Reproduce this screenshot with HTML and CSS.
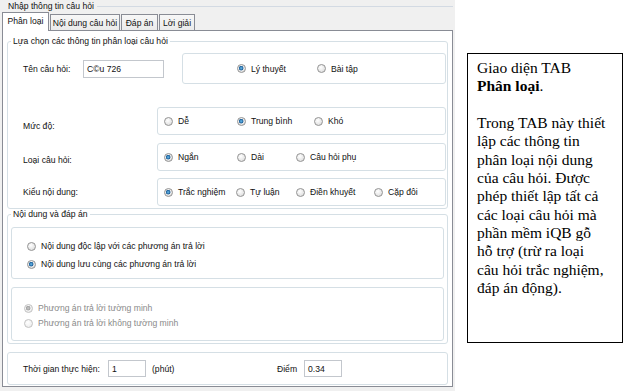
FILE: index.html
```html
<!DOCTYPE html>
<html lang="vi">
<head>
    <meta charset="UTF-8">
    <title>Nhập thông tin câu hỏi</title>
    <link rel="stylesheet" href="styles.css">
</head>
<body>
    <div class="page">
        <div class="dialog">
            <div class="dlg-title"><span>Nhập thông tin câu hỏi</span></div>

            <div class="tabs">
                <div class="tab active">Phân loại</div>
                <div class="tab tab-content">Nội dung câu hỏi</div>
                <div class="tab tab-answer">Đáp án</div>
                <div class="tab tab-solution">Lời giải</div>
            </div>

            <div class="panel">
                <fieldset class="section">
                    <legend>Lựa chọn các thông tin phân loại câu hỏi</legend>
                    <div class="section-body classify">
                        <div class="row row-name">
                            <span class="field-label name-label">Tên câu hỏi:</span>
                            <div class="textbox tb-name">C©u 726</div>
                            <div class="group grp-kind">
                                <span class="opt w80"><i class="radio checked"></i>Lý thuyết</span>
                                <span class="opt"><i class="radio"></i>Bài tập</span>
                            </div>
                        </div>

                        <div class="row row-level">
                            <span class="field-label">Mức độ:</span>
                            <div class="group">
                                <span class="opt w73"><i class="radio"></i>Dễ</span>
                                <span class="opt w77"><i class="radio checked"></i>Trung bình</span>
                                <span class="opt"><i class="radio"></i>Khó</span>
                            </div>
                        </div>

                        <div class="row row-type">
                            <span class="field-label">Loại câu hỏi:</span>
                            <div class="group">
                                <span class="opt w73"><i class="radio checked"></i>Ngắn</span>
                                <span class="opt w59"><i class="radio"></i>Dài</span>
                                <span class="opt"><i class="radio"></i>Câu hỏi phụ</span>
                            </div>
                        </div>

                        <div class="row row-format">
                            <span class="field-label">Kiểu nội dung:</span>
                            <div class="group">
                                <span class="opt w72"><i class="radio checked"></i>Trắc nghiệm</span>
                                <span class="opt w60"><i class="radio"></i>Tự luận</span>
                                <span class="opt w78"><i class="radio"></i>Điền khuyết</span>
                                <span class="opt"><i class="radio"></i>Cặp đôi</span>
                            </div>
                        </div>
                    </div>
                </fieldset>

                <fieldset class="section">
                    <legend>Nội dung và đáp án</legend>
                    <div class="section-body answers">
                        <div class="group stack grp-storage">
                            <span class="opt"><i class="radio"></i>Nội dung độc lập với các phương án trả lời</span>
                            <span class="opt"><i class="radio checked"></i>Nội dung lưu cùng các phương án trả lời</span>
                        </div>
                        <div class="group stack grp-explicit">
                            <span class="opt disabled"><i class="radio checked"></i>Phương án trả lời tường minh</span>
                            <span class="opt disabled"><i class="radio"></i>Phương án trả lời không tường minh</span>
                        </div>
                    </div>
                </fieldset>

                <div class="group footer">
                    <span class="time-label">Thời gian thực hiện:</span>
                    <div class="textbox tb-small">1</div>
                    <span class="unit">(phút)</span>
                    <span class="score-label">Điểm</span>
                    <div class="textbox tb-small">0.34</div>
                </div>
            </div>
        </div>

        <div class="note">
            Giao diện TAB<br>
            <b>Phân loại</b>.<br>
            <br>
            Trong TAB này thiết<br>
            lập các thông tin<br>
            phân loại nội dung<br>
            của câu hỏi. Được<br>
            phép thiết lập tất cả<br>
            các loại câu hỏi mà<br>
            phần mềm iQB gỗ<br>
            hỗ trợ (trừ ra loại<br>
            câu hỏi trắc nghiệm,<br>
            đáp án động).
        </div>
    </div>
</body>
</html>
```

FILE: styles.css
```css
:root {
    --ui-bg: #f0f0f0;
    --ui-text: #111;
    --ui-muted: #8a8a8a;
    --tab-border: #898c95;
    --group-border: #d5dfe5;
    --input-border: #c3c7cd;
}

* {
    margin: 0;
    padding: 0;
    box-sizing: border-box;
}

body {
    background-color: white;
    font-family: 'Liberation Sans', Arial, sans-serif;
    font-size: 8.6px;
    color: var(--ui-text);
}

.page {
    display: flex;
    align-items: flex-start;
}

/* ---------- dialog ---------- */

.dialog {
    width: 455px;
    height: 391px;
    background-color: var(--ui-bg);
    flex: none;
}

.dlg-title {
    height: 12px;
    padding-left: 8px;
    padding-right: 2px;
    display: flex;
    align-items: center;
    line-height: 10px;
}

.dlg-title::after {
    content: '';
    flex: 1;
    margin-left: 3px;
    border-top: 1px solid #d3dae3;
}

.tabs {
    display: flex;
    align-items: flex-end;
    height: 19px;
    margin-left: 2px;
    margin-bottom: -1px;
}

.tab {
    height: 16px;
    margin-bottom: 1px;
    margin-left: 1px;
    border: 1px solid var(--tab-border);
    border-bottom: none;
    background: linear-gradient(#f7f7f7, #ebebeb);
    display: flex;
    align-items: center;
    justify-content: center;
    line-height: 10px;
    padding-top: 1px;
}

.tab.active {
    position: relative;
    z-index: 1;
    height: 19px;
    width: 47px;
    margin-left: 0;
    margin-bottom: 0;
    background: white;
    padding-top: 0;
    padding-bottom: 2px;
}

.tab-content { width: 70px; }
.tab-answer { width: 37px; }
.tab-solution { width: 36px; }

.panel {
    width: 451px;
    height: 357px;
    margin-left: 2px;
    border: 1px solid var(--tab-border);
    background-color: white;
}

/* ---------- group boxes ---------- */

.section {
    margin: 5px 4px 0 4px;
    border: 1px solid var(--group-border);
    border-radius: 3px;
}

.section + .section {
    margin-top: 0;
}

.section legend {
    margin-left: 3px;
    padding: 0 2px;
    line-height: 10px;
    height: 10px;
}

.section-body.classify {
    padding: 7px 1px 2px 15px;
}

.section-body.answers {
    padding: 8px 3px 2px 3px;
}

.group {
    border: 1px solid var(--group-border);
    border-radius: 3px;
    display: flex;
    align-items: center;
    padding-left: 6px;
    box-shadow: inset 0 0 0 1px white;
}

.row {
    display: flex;
    align-items: center;
    height: 28px;
}

.row .group {
    flex: 1;
    height: 28px;
}

.row-name {
    height: 32px;
}

.row-level { margin-top: 22px; }
.row-type { margin-top: 8px; }
.row-format { margin-top: 7px; }

.row-level .field-label { padding-top: 9px; }
.row-type .field-label { padding-top: 6px; }

.field-label {
    width: 134px;
    flex: none;
}

.name-label {
    width: 60px;
}

.grp-kind {
    margin-left: 18px;
    padding-left: 54px;
}

.row .grp-kind {
    height: 31px;
    align-self: flex-start;
}

.textbox {
    height: 18px;
    border: 1px solid var(--input-border);
    background-color: white;
    padding: 0 3px;
    display: flex;
    align-items: center;
    flex: none;
}

.tb-name {
    width: 81px;
}

.tb-small {
    width: 38px;
    height: 17px;
}

/* ---------- radio buttons ---------- */

.opt {
    display: inline-flex;
    align-items: center;
    line-height: 10px;
    height: 10px;
    white-space: nowrap;
    flex: none;
}

.w59 { width: 59px; }
.w60 { width: 60px; }
.w72 { width: 72px; }
.w73 { width: 73px; }
.w77 { width: 77px; }
.w78 { width: 78px; }
.w80 { width: 80px; }

.radio {
    width: 9px;
    height: 9px;
    margin-right: 5px;
    border: 1px solid #939393;
    border-radius: 50%;
    background: radial-gradient(circle at 40% 35%, #ffffff, #d6d6d6);
    flex: none;
}

.radio.checked {
    background:
        radial-gradient(circle at 45% 45%, #6cc0f0 0, #1d5f99 2px, transparent 2.6px),
        radial-gradient(circle at 40% 35%, #ffffff, #d6d6d6);
}

.opt.disabled {
    color: var(--ui-muted);
}

.opt.disabled .radio {
    border-color: #c2c2c2;
    background: radial-gradient(circle at 40% 35%, #ffffff, #e8e8e8);
}

.opt.disabled .radio.checked {
    background:
        radial-gradient(circle at 45% 45%, #c9c9c9 0, #a2a2a2 2px, transparent 2.6px),
        radial-gradient(circle at 40% 35%, #ffffff, #e8e8e8);
}

.stack {
    flex-direction: column;
    align-items: flex-start;
}

.grp-storage {
    height: 52px;
    padding-top: 13px;
    padding-left: 15px;
    gap: 8px;
}

.grp-explicit {
    height: 54px;
    margin-top: 8px;
    padding-top: 15px;
    padding-left: 12px;
    gap: 5px;
}

/* ---------- footer ---------- */

.footer {
    margin: 8px 4px 0 4px;
    height: 33px;
    padding-left: 15px;
}

.time-label {
    width: 85px;
}

.unit {
    width: 125px;
    margin-left: 6px;
}

.score-label {
    width: 27px;
}

/* ---------- note ---------- */

.note {
    width: 156px;
    height: 290px;
    margin-top: 53px;
    margin-left: 12px;
    padding: 5px 9px;
    border: 1px solid black;
    font-family: 'Liberation Serif', 'Times New Roman', serif;
    font-size: 15.5px;
    line-height: 18.35px;
    color: black;
    white-space: nowrap;
}
```
